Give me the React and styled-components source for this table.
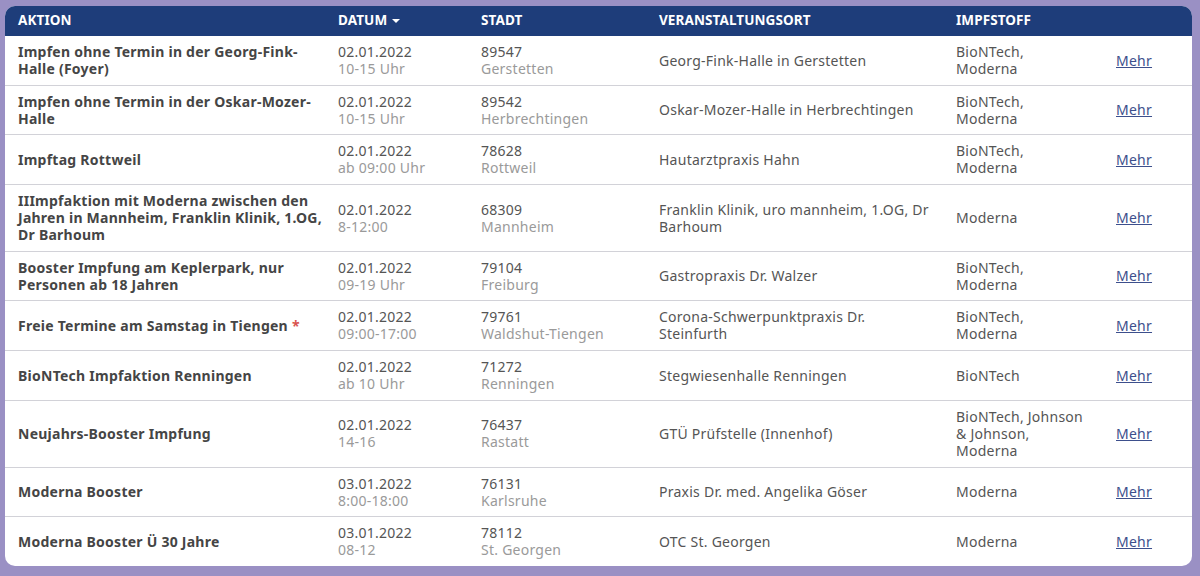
import React from "react";
import styled, { createGlobalStyle } from "styled-components";

const Global = createGlobalStyle`
  html, body { margin: 0; padding: 0; background: #9a90c4; }
  body { font-family: "Noto Sans", "Open Sans", sans-serif; }
`;

const Page = styled.div`
  padding: 6px 8px 6px 5px;
  background: #9a90c4;
  min-height: 576px;
  box-sizing: border-box;
`;

const Card = styled.div`
  background: #fff;
  border-radius: 10px;
  overflow: hidden;
`;

const Table = styled.table`
  width: 100%;
  border-collapse: collapse;
  table-layout: fixed;
  font-size: 14px;
  line-height: 17px;
  letter-spacing: 0.25px;
`;

const Col = styled.col`
  width: ${(p) => p.$w}px;
`;

const Head = styled.thead`
  background: #1e3d7a;
`;

const Th = styled.th`
  text-align: left;
  color: #fff;
  font-weight: 700;
  font-size: 13.5px;
  letter-spacing: 0.1px;
  text-transform: uppercase;
  padding: 6px 6px 7px 13px;
  white-space: nowrap;
`;

const Caret = styled.span`
  display: inline-block;
  margin-left: 5px;
  vertical-align: middle;
  width: 0;
  height: 0;
  border-left: 4px solid transparent;
  border-right: 4px solid transparent;
  border-top: 4px solid #fff;
`;

const Row = styled.tr`
  & + & td { border-top: 1px solid #d2d2d8; }
`;

const Td = styled.td`
  padding: 7px ${(p) => p.$pr ?? 6}px 7.7px 13px;
  vertical-align: middle;
  color: #555;
  white-space: pre-line;
`;

const Title = styled.span`
  font-weight: 700;
  color: #454545;
`;

const Star = styled.span`
  color: #d9534f;
  font-weight: 700;
  margin-left: 4px;
`;

const Main = styled.div`
  color: #555;
`;

const Sub = styled.div`
  color: #9a9a9a;
`;

const More = styled.a`
  color: #3d4f8c;
  text-decoration: underline;
  cursor: pointer;
`;

const rows = [
  { t: "Impfen ohne Termin in der Georg-Fink-\nHalle (Foyer)", d: "02.01.2022", h: "10-15 Uhr", z: "89547", c: "Gerstetten", v: "Georg-Fink-Halle in Gerstetten", i: "BioNTech,\nModerna" },
  { t: "Impfen ohne Termin in der Oskar-Mozer-\nHalle", d: "02.01.2022", h: "10-15 Uhr", z: "89542", c: "Herbrechtingen", v: "Oskar-Mozer-Halle in Herbrechtingen", i: "BioNTech,\nModerna" },
  { t: "Impftag Rottweil", d: "02.01.2022", h: "ab 09:00 Uhr", z: "78628", c: "Rottweil", v: "Hautarztpraxis Hahn", i: "BioNTech,\nModerna" },
  { t: "IIImpfaktion mit Moderna zwischen den\nJahren in Mannheim, Franklin Klinik, 1.OG,\nDr Barhoum", d: "02.01.2022", h: "8-12:00", z: "68309", c: "Mannheim", v: "Franklin Klinik, uro mannheim, 1.OG, Dr\nBarhoum", i: "Moderna" },
  { t: "Booster Impfung am Keplerpark, nur\nPersonen ab 18 Jahren", d: "02.01.2022", h: "09-19 Uhr", z: "79104", c: "Freiburg", v: "Gastropraxis Dr. Walzer", i: "BioNTech,\nModerna" },
  { t: "Freie Termine am Samstag in Tiengen", star: true, d: "02.01.2022", h: "09:00-17:00", z: "79761", c: "Waldshut-Tiengen", v: "Corona-Schwerpunktpraxis Dr.\nSteinfurth", i: "BioNTech,\nModerna" },
  { t: "BioNTech Impfaktion Renningen", d: "02.01.2022", h: "ab 10 Uhr", z: "71272", c: "Renningen", v: "Stegwiesenhalle Renningen", i: "BioNTech" },
  { t: "Neujahrs-Booster Impfung", d: "02.01.2022", h: "14-16", z: "76437", c: "Rastatt", v: "GTÜ Prüfstelle (Innenhof)", i: "BioNTech, Johnson\n& Johnson,\nModerna" },
  { t: "Moderna Booster", d: "03.01.2022", h: "8:00-18:00", z: "76131", c: "Karlsruhe", v: "Praxis Dr. med. Angelika Göser", i: "Moderna" },
  { t: "Moderna Booster Ü 30 Jahre", d: "03.01.2022", h: "08-12", z: "78112", c: "St. Georgen", v: "OTC St. Georgen", i: "Moderna" },
];

export default function App() {
  return (
    <Page>
      <Global />
      <Card>
        <Table>
          <colgroup>
            <Col $w={320} />
            <Col $w={143} />
            <Col $w={178} />
            <Col $w={297} />
            <Col $w={160} />
            <Col $w={89} />
          </colgroup>
          <Head>
            <tr>
              <Th>Aktion</Th>
              <Th>Datum<Caret /></Th>
              <Th>Stadt</Th>
              <Th>Veranstaltungsort</Th>
              <Th>Impfstoff</Th>
              <Th></Th>
            </tr>
          </Head>
          <tbody>
            {rows.map((r, k) => (
              <Row key={k}>
                <Td $pr={2}>
                  <Title>{r.t}</Title>
                  {r.star && <Star>*</Star>}
                </Td>
                <Td>
                  <Main>{r.d}</Main>
                  <Sub>{r.h}</Sub>
                </Td>
                <Td>
                  <Main>{r.z}</Main>
                  <Sub>{r.c}</Sub>
                </Td>
                <Td $pr={4}>{r.v}</Td>
                <Td $pr={4}>{r.i}</Td>
                <Td>
                  <More>Mehr</More>
                </Td>
              </Row>
            ))}
          </tbody>
        </Table>
      </Card>
    </Page>
  );
}
